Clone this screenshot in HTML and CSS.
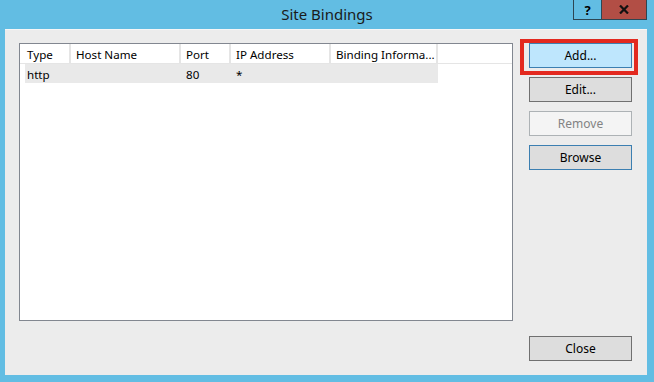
FILE: index.html
```html
<!DOCTYPE html>
<html lang="en">
<head>
    <meta charset="UTF-8">
    <title>Site Bindings</title>
    <link rel="stylesheet" href="styles.css">
</head>
<body>
    <div class="window">
        <div class="titlebar">
            <div class="title">Site Bindings</div>
            <div class="caption-buttons">
                <div class="cap-btn help">?</div>
                <div class="cap-btn close">
                    <svg width="10" height="9" viewBox="0 0 10 9"><path d="M1 0.5 L9 8.5 M9 0.5 L1 8.5" stroke="#111" stroke-width="2.2"/></svg>
                </div>
            </div>
        </div>
        <div class="client">
            <div class="listview">
                <div class="lv-header">
                    <div class="lv-col col-type">Type</div>
                    <div class="lv-col col-host">Host Name</div>
                    <div class="lv-col col-port">Port</div>
                    <div class="lv-col col-ip">IP Address</div>
                    <div class="lv-col col-info">Binding Informa...</div>
                </div>
                <div class="lv-row">
                    <div class="lv-cell first">http</div>
                    <div class="lv-cell col-host"></div>
                    <div class="lv-cell col-port">80</div>
                    <div class="lv-cell col-ip">*</div>
                    <div class="lv-cell col-info"></div>
                </div>
            </div>
            <div class="side">
                <button class="btn btn-default">Add...</button>
                <button class="btn">Edit...</button>
                <button class="btn" disabled>Remove</button>
                <button class="btn btn-focus">Browse</button>
                <button class="btn btn-close">Close</button>
            </div>
        </div>
        <div class="highlight"></div>
    </div>
</body>
</html>
```

FILE: styles.css
```css
body {
    margin: 0;
    background: #62bde3;
    font-family: "Noto Sans", "Open Sans", sans-serif;
    font-size: 12px;
    color: #000;
}
.window {
    position: relative;
    width: 654px;
    height: 382px;
    background: #62bde3;
}
.titlebar {
    height: 29px;
    display: flex;
    justify-content: center;
    position: relative;
}
.title {
    font-size: 15px;
    line-height: 28px;
    color: #1a1a1a;
}
.caption-buttons {
    position: absolute;
    top: 0;
    right: 7px;
    display: flex;
}
.cap-btn {
    height: 19px;
    border: 1px solid #2d4653;
    border-top: none;
    display: flex;
    align-items: center;
    justify-content: center;
    font-weight: bold;
    font-size: 13px;
}
.cap-btn.help {
    width: 27px;
    border-right: none;
}
.cap-btn.close {
    width: 44px;
    background: #b24e45;
}
.client {
    margin-left: 5px;
    width: 642px;
    height: 346px;
    box-sizing: border-box;
    background: #ececec;
    border-top: 1px solid #f6f6f6;
    padding: 13px 15px 14px 14px;
    display: flex;
}
.listview {
    width: 494px;
    height: 278px;
    box-sizing: border-box;
    border: 1px solid #828790;
    background: #fff;
    align-self: flex-start;
    font-size: 11.6px;
}
.lv-header {
    display: flex;
    height: 19px;
    border-bottom: 1px solid #e5e5e5;
    padding-left: 2px;
}
.lv-col {
    box-sizing: border-box;
    border-right: 2px solid #e5e5e5;
    padding-left: 5px;
    line-height: 22px;
    white-space: nowrap;
    overflow: hidden;
}
.col-type { width: 49px; }
.col-host { width: 110px; }
.col-port { width: 50px; }
.col-ip { width: 100px; }
.col-info { width: 107px; }
.lv-row {
    display: flex;
    height: 19px;
    margin-left: 5px;
    width: 413px;
    background: #e9e9e9;
}
.lv-cell {
    box-sizing: border-box;
    padding-left: 5px;
    line-height: 21px;
    white-space: nowrap;
}
.lv-cell.first {
    width: 46px;
    padding-left: 2px;
}
.side {
    margin-left: 16px;
    width: 103px;
    display: flex;
    flex-direction: column;
    gap: 9px;
}
.btn {
    height: 25px;
    width: 103px;
    box-sizing: border-box;
    border: 1px solid #707070;
    background: #dddddd;
    font-family: inherit;
    font-size: 12px;
    color: #000;
    padding: 0;
}
.btn-default {
    background: #bee6fd;
    border-color: #3c7fb1;
}
.btn:disabled {
    background: #f4f4f4;
    border-color: #adb2b5;
    color: #838383;
}
.btn-focus {
    border-color: #3c7fb1;
}
.btn-close {
    margin-top: auto;
}
.highlight {
    position: absolute;
    left: 520px;
    top: 39px;
    width: 118px;
    height: 36px;
    box-sizing: border-box;
    border: 4px solid #e3291f;
}
```
